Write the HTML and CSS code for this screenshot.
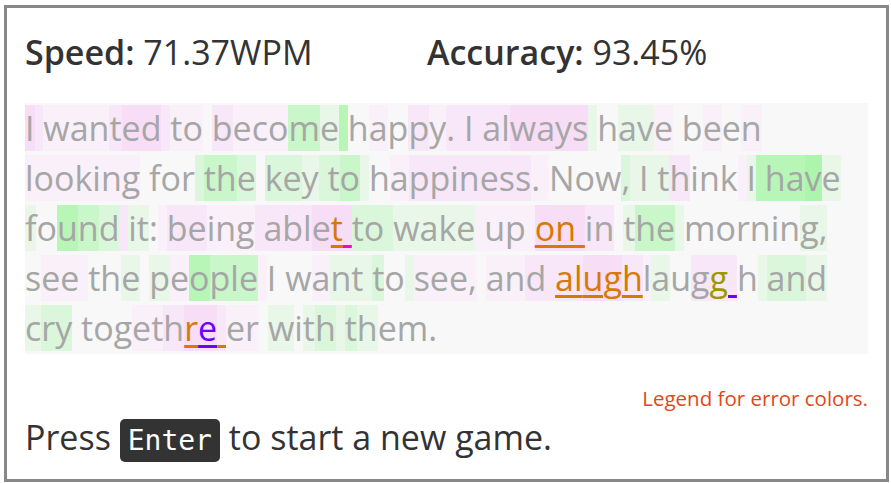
FILE: index.html
```html
<!DOCTYPE html>
<html lang="en">
<head>
<meta charset="utf-8">
<title>Typing game</title>
<link rel="stylesheet" href="styles.css">
</head>
<body>
<div class="game">
  <div class="stats">
    <div class="stat"><b>Speed:</b> 71.37WPM</div>
    <div class="stat"><b>Accuracy:</b> 93.45%</div>
  </div>
  <div class="text"><span class="a">I</span><span class="b"> </span><span class="c">wan</span><span class="b">t</span><span class="a">ed</span><span class="b"> </span><span class="c">to</span> <span class="b">b</span><span class="c">eco</span><span class="H">m</span><span class="K">e</span><span class="G"> </span>h<span class="c">a</span>p<span class="b">p</span><span class="c">y</span><span class="b">. I al</span><span class="a">ways</span><span class="K"> </span>h<span class="K">av</span><span class="c">e</span> b<span class="c">e</span>e<span class="c">n</span><br><span class="c">looking</span> for<span class="J"> </span><span class="H">th</span><span class="J">e</span> <span class="J">ke</span><span class="K">y</span><span class="J"> t</span><span class="H">o</span><span class="K"> </span>h<span class="c">a</span><span class="b">ppiness</span><span class="c">. </span>Now<span class="J">,</span><span class="K"> I t</span><span class="b">h</span>ink<span class="c"> </span><span class="K">I</span><span class="G"> ha</span><span class="G2">v</span><span class="K">e</span><br><span class="K">f</span>o<span class="G">u</span><span class="H">n</span><span class="J">d</span><span class="b"> </span><span class="K">it</span>:<span class="c"> </span><span class="b">be</span><span class="c">ing</span><span class="b"> abl</span><span class="a">e</span><span class="a eo">t</span><span class="a um"> </span><span class="J">to </span><span class="K">wake</span><span class="c"> </span><span class="c">up </span><span class="a eo">on </span><span class="b">in</span> <span class="K">t</span><span class="H">he</span><span class="K"> </span>mornin<span class="K">g,</span><br>s<span class="c">ee </span>th<span class="K">e</span> <span class="K">p</span><span class="c">e</span><span class="G">o</span><span class="H">ple</span><span class="c"> </span>I w<span class="c">a</span><span class="K">nt </span><span class="J">t</span>o<span class="K"> </span><span class="c">see,</span> <span class="c">an</span><span class="b">d </span><span class="b eo">al</span><span class="a eo">u</span><span class="a o">g</span><span class="b eo">h</span><span class="c">l</span><span class="K">a</span>u<span class="b">g</span><span class="b ol">g</span><span class="b up"> </span>h<span class="K"> </span><span class="J">an</span><span class="K">d</span><br><span class="K">c</span><span class="J">ry</span> tog<span class="c">et</span><span class="b">h</span><span class="a eo">r</span><span class="a ep">e</span><span class="b eo"> </span><span class="c">er</span> <span class="K">w</span>i<span class="K">t</span><span class="J">h</span><span class="K"> </span><span class="J">t</span><span class="K">h</span>em.</div>
  <div class="legend">Legend for error colors.</div>
  <div class="press">Press <kbd class="key">Enter</kbd> to start a new game.</div>
</div>
</body>
</html>
```
FILE: styles.css
```css
body {
  margin: 0;
  font-family: "Open Sans", "Noto Sans", sans-serif;
  color: #333;
}
.game {
  box-sizing: border-box;
  width: 885px;
  height: 477px;
  margin: 5px 0 0 4px;
  border: 3px solid #888;
  padding: 0 18px;
}
.stats {
  display: grid;
  grid-template-columns: 402px auto;
  margin-top: 21px;
  font-size: 34px;
  line-height: 46px;
}
.stat b { font-weight: 600; }
.text {
  margin-top: 28px;
  background: #f8f8f8;
  color: #a6a6a6;
  font-size: 34px;
  line-height: 50px;
  white-space: nowrap;
  padding-bottom: 1px;
}
.a { background: #f7ddf6; }
.b { background: #f8e7f8; }
.c { background: #f9f0f9; }
.G { background: #b7f6b7; }
.G2 { background: #adf5ad; }
.H { background: #c9f7c9; }
.J { background: #dbf7db; }
.K { background: #e8f7e8; }
.eo, .o {
  color: #d67a00;
}
.eo, .ep, .um, .up {
  text-decoration-line: underline;
  text-decoration-thickness: 3px;
  text-underline-offset: 4px;
}
.eo { text-decoration-color: #d67a00; }
.ep { color: #6a00ff; text-decoration-color: #6a00ff; }
.um { text-decoration-color: #ff00c8; }
.up { text-decoration-color: #6a00ff; }
.ol { color: #999900; }
.legend {
  margin-top: 31px;
  text-align: right;
  font-size: 20.5px;
  line-height: 26px;
  color: #e0481a;
}
.press {
  margin-top: 3px;
  font-size: 34px;
  line-height: 46px;
}
.key {
  display: inline-block;
  background: #333;
  color: #fff;
  font-family: "DejaVu Sans Mono", monospace;
  font-size: 28px;
  line-height: 43px;
  padding: 0 8px;
  border-radius: 5px;
}
```
